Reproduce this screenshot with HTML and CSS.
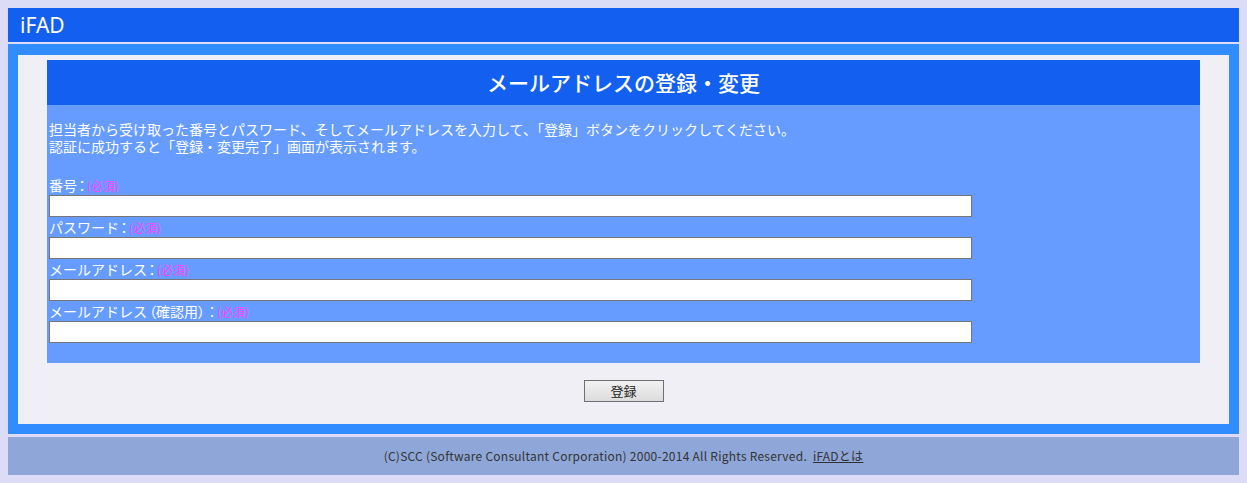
FILE: index.html
```html
<!DOCTYPE html>
<html lang="ja">
<head>
<meta charset="utf-8">
<title>iFAD - メールアドレスの登録・変更</title>
<link rel="stylesheet" href="styles.css">
</head>
<body>
<header class="top">iFAD</header>
<main class="frame">
  <section class="panel">
    <h1 class="panel-title">メールアドレスの登録・変更</h1>
    <div class="panel-body">
      <p class="intro"><span class="intro-line">担当者から受け取った番号とパスワード、そしてメールアドレスを入力して、「登録」ボタンをクリックしてください。</span><span class="intro-line">認証に成功すると「登録・変更完了」画面が表示されます。</span></p>
      <div class="field">
        <label class="label">番号<span class="colon">：</span><span class="req">(必須)</span></label>
        <input class="input" type="text">
      </div>
      <div class="field">
        <label class="label">パスワード<span class="colon">：</span><span class="req">(必須)</span></label>
        <input class="input" type="password">
      </div>
      <div class="field">
        <label class="label">メールアドレス<span class="colon">：</span><span class="req">(必須)</span></label>
        <input class="input" type="text">
      </div>
      <div class="field">
        <label class="label">メールアドレス<span class="paren">（確認用）</span><span class="colon">：</span><span class="req">(必須)</span></label>
        <input class="input" type="text">
      </div>
    </div>
  </section>
  <div class="actions">
    <button class="btn" type="button">登録</button>
  </div>
</main>
<footer class="foot">(C)SCC (Software Consultant Corporation) 2000-2014 All Rights Reserved.&nbsp; <a class="foot-link" href="#">iFADとは</a></footer>
</body>
</html>
```

FILE: styles.css
```css
html, body {
  margin: 0;
  padding: 0;
}
body {
  margin: 8px;
  background: #dcdcf6;
  font-family: "Noto Sans CJK JP", "Noto Sans", sans-serif;
  color: #fff;
}
.top {
  height: 34px;
  line-height: 34px;
  background: #1360f0;
  color: #fff;
  font-family: "Noto Sans", "Noto Sans CJK JP", sans-serif;
  font-size: 21px;
  padding-left: 12px;
}
.frame {
  display: block;
  margin-top: 2px;
  border: 10px solid #318cff;
  border-top-width: 11px;
  background: #f0eff5;
}
.panel {
  margin: 5px 29px 0;
}
.panel-title {
  margin: 0;
  height: 45px;
  line-height: 45px;
  background: #1360f0;
  color: #fff;
  font-size: 21px;
  font-weight: 500;
  text-align: center;
}
.panel-body {
  background: #669cff;
  padding: 16px 2px 20px;
}
.intro {
  margin: 0 0 20px;
  font-size: 14px;
  display: flex;
  flex-direction: column;
}
.intro-line {
  display: block;
  height: 17px;
  line-height: 17px;
  white-space: nowrap;
}
.field {
  display: flex;
  flex-direction: column;
}
.label {
  height: 20px;
  line-height: 20px;
  font-size: 14px;
}
.colon {
  display: inline-block;
  width: 10px;
  text-align: center;
  font-feature-settings: "palt";
}
.paren {
  font-feature-settings: "palt";
  padding: 0 2px;
}
.req {
  color: #ff44ff;
  font-size: 12px;
}
.input {
  box-sizing: border-box;
  width: 923px;
  height: 22px;
  margin: 0;
  border: 1px solid #767676;
  background: #fff;
  padding: 0 3px;
}
.actions {
  padding: 17px 0 22px;
  display: flex;
  justify-content: center;
}
.btn {
  box-sizing: border-box;
  width: 80px;
  height: 22px;
  border: 1px solid #707070;
  background: linear-gradient(#f2f2f2, #dcdcdc);
  color: #222;
  font-family: "Noto Sans CJK JP", sans-serif;
  font-size: 13px;
  padding: 0;
  line-height: 20px;
}
.foot {
  margin-top: 3px;
  height: 38px;
  line-height: 38px;
  background: #8fa7d8;
  color: #333;
  text-align: center;
  font-size: 12px;
  letter-spacing: 0.25px;
}
.foot-link {
  color: #333;
  text-decoration: underline;
}
```
